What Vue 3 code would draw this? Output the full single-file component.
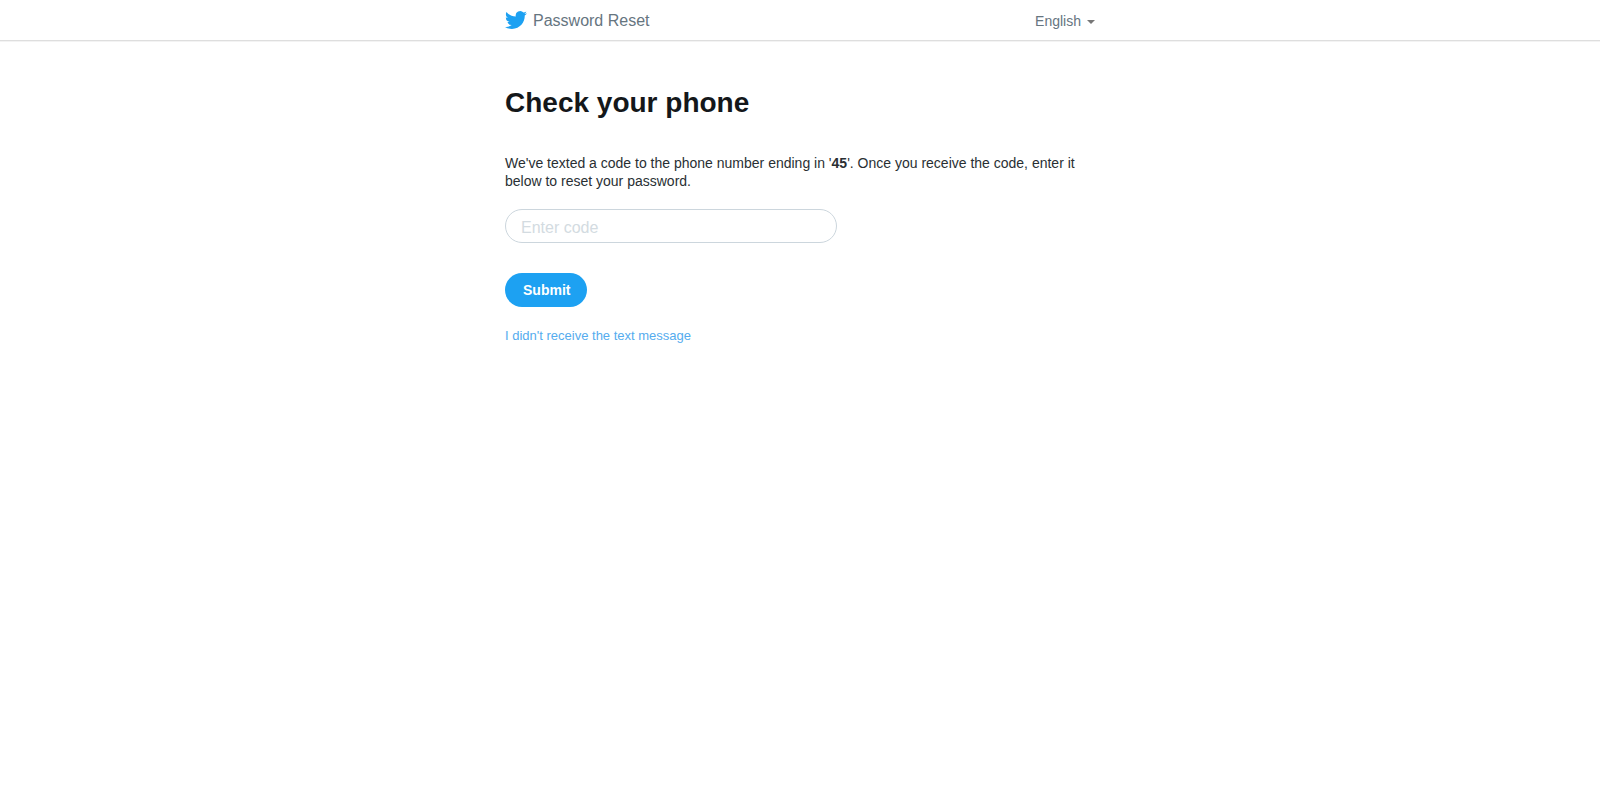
<script setup>
import { ref } from 'vue'

const code = ref('')
</script>

<template>
  <div class="page">
    <header class="topbar">
      <div class="container topbar-inner">
        <div class="brand">
          <svg class="bird" viewBox="0 0 24 24" aria-hidden="true">
            <path d="M23.954 4.569a10 10 0 0 1-2.825.775 4.958 4.958 0 0 0 2.163-2.723c-.951.555-2.005.959-3.127 1.184a4.92 4.92 0 0 0-8.384 4.482C7.691 8.094 4.066 6.13 1.64 3.161a4.822 4.822 0 0 0-.666 2.475c0 1.71.87 3.213 2.188 4.096a4.904 4.904 0 0 1-2.228-.616v.061a4.923 4.923 0 0 0 3.946 4.827 4.996 4.996 0 0 1-2.212.085 4.937 4.937 0 0 0 4.604 3.417 9.868 9.868 0 0 1-6.102 2.105c-.39 0-.779-.023-1.17-.067a13.995 13.995 0 0 0 7.557 2.209c9.054 0 13.999-7.496 13.999-13.986 0-.209 0-.42-.015-.63a9.936 9.936 0 0 0 2.46-2.548l-.047-.02z" />
          </svg>
          <span class="brand-title">Password Reset</span>
        </div>
        <button class="language" type="button" aria-haspopup="true">
          English
          <span class="caret" aria-hidden="true"></span>
        </button>
      </div>
    </header>

    <main class="container content">
      <h1>Check your phone</h1>
      <form @submit.prevent>
        <label class="message" for="code">We've texted a code to the phone number ending in '<strong>45</strong>'. Once you receive the code, enter it below to reset your password.</label>
        <input id="code" v-model="code" class="code" type="text" placeholder="Enter code" autocomplete="off" />
        <button class="submit" type="submit">Submit</button>
      </form>
      <a class="resend" href="#">I didn't receive the text message</a>
    </main>
  </div>
</template>

<style>
body {
  margin: 0;
  background: #fff;
}
</style>

<style scoped>
.page {
  font-family: "Liberation Sans", Arial, sans-serif;
  font-size: 14px;
  line-height: 18px;
  color: #292f33;
}

.container {
  box-sizing: border-box;
  width: 100%;
  max-width: 590px;
  margin: 0 auto;
}

.topbar {
  border-bottom: 1px solid #dedede;
  box-shadow: 0 1px 0 #f3f3f3;
}

.topbar-inner {
  display: flex;
  align-items: center;
  justify-content: space-between;
  height: 40px;
  color: #66757f;
}

.brand {
  display: flex;
  align-items: center;
  gap: 6px;
}

.bird {
  width: 22px;
  height: 22px;
  fill: #1da1f2;
}

.brand-title {
  padding-top: 2px;
  font-size: 16px;
  line-height: 20px;
}

.language {
  display: flex;
  align-items: center;
  gap: 6px;
  padding: 2px 0 0;
  border: 0;
  background: none;
  color: inherit;
  font: inherit;
  cursor: pointer;
}

.caret {
  margin-top: 2px;
  border: 4px solid transparent;
  border-top-color: #777;
  border-bottom: 0;
}

.content {
  padding-top: 44px;
}

h1 {
  margin: 0 0 33px;
  font-size: 28px;
  line-height: 36px;
  color: #14171a;
}

form {
  display: flex;
  flex-direction: column;
  align-items: flex-start;
}

.message {
  margin-bottom: 19px;
}

.code {
  box-sizing: border-box;
  width: 332px;
  max-width: 100%;
  height: 34px;
  margin-bottom: 30px;
  padding: 3px 15px 0;
  border: 1px solid #ccd6dd;
  border-radius: 17px;
  color: #14171a;
  font: inherit;
  font-size: 16px;
}

.code::placeholder {
  color: #d3dbe1;
}

.submit {
  height: 34px;
  margin-bottom: 19px;
  padding: 0 17px 0 18px;
  border: 0;
  border-radius: 17px;
  background: #1da1f2;
  color: #fff;
  font: inherit;
  font-weight: bold;
  cursor: pointer;
}

.resend {
  color: #55acee;
  font-size: 13px;
  text-decoration: none;
}
</style>
